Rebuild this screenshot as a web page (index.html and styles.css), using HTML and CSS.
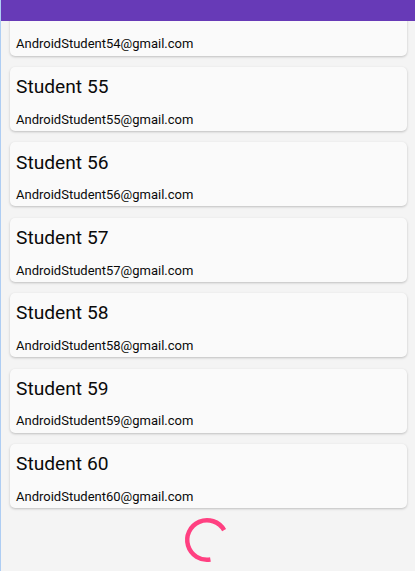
FILE: index.html
```html
<!DOCTYPE html>
<html>
<head>
<meta charset="utf-8">
<link rel="stylesheet" href="styles.css">
</head>
<body>
<div class="screen">
  <header class="appbar"></header>
  <main class="viewport">
    <div class="list">
      <div class="card"><div class="name"></div><div class="email">AndroidStudent54@gmail.com</div></div>
      <div class="card"><div class="name">Student 55</div><div class="email">AndroidStudent55@gmail.com</div></div>
      <div class="card"><div class="name">Student 56</div><div class="email">AndroidStudent56@gmail.com</div></div>
      <div class="card"><div class="name">Student 57</div><div class="email">AndroidStudent57@gmail.com</div></div>
      <div class="card"><div class="name">Student 58</div><div class="email">AndroidStudent58@gmail.com</div></div>
      <div class="card"><div class="name">Student 59</div><div class="email">AndroidStudent59@gmail.com</div></div>
      <div class="card"><div class="name">Student 60</div><div class="email">AndroidStudent60@gmail.com</div></div>
      <div class="loader">
        <svg width="48" height="48" viewBox="0 0 48 48">
          <path d="M27.43 43.45 A19.75 19.75 0 1 1 41.1 14.13" fill="none" stroke="#ff4081" stroke-width="4.5"/>
        </svg>
      </div>
    </div>
  </main>
</div>
</body>
</html>
```

FILE: styles.css
```css
html, body {
  margin: 0;
  padding: 0;
}
body {
  width: 415px;
  height: 571px;
  overflow: hidden;
  background: #f4f4f4;
  font-family: Roboto, "Noto Sans", sans-serif;
}
.screen {
  height: 571px;
  border-left: 1px solid #aecdf3;
  display: flex;
  flex-direction: column;
}
.appbar {
  height: 21px;
  flex: none;
  background: #673ab7;
}
.viewport {
  flex: 1;
  overflow: hidden;
}
.list {
  margin-top: -29.4px;
  padding: 0 8px 0 9px;
  display: flex;
  flex-direction: column;
  gap: 11.4px;
}
.card {
  height: 64px;
  box-sizing: border-box;
  padding: 8.2px 6px 0 6px;
  background: #fafafa;
  border-radius: 5px;
  box-shadow: 0 1px 2.5px rgba(0, 0, 0, 0.22);
}
.name {
  height: 24px;
  font-size: 19.2px;
  line-height: 24px;
  color: #0a0a0a;
}
.email {
  margin-top: 10.6px;
  font-size: 13px;
  line-height: 20px;
  color: #0a0a0a;
}
.loader {
  display: flex;
  justify-content: center;
  padding-right: 3px;
  margin-top: -3.4px;
}
```
